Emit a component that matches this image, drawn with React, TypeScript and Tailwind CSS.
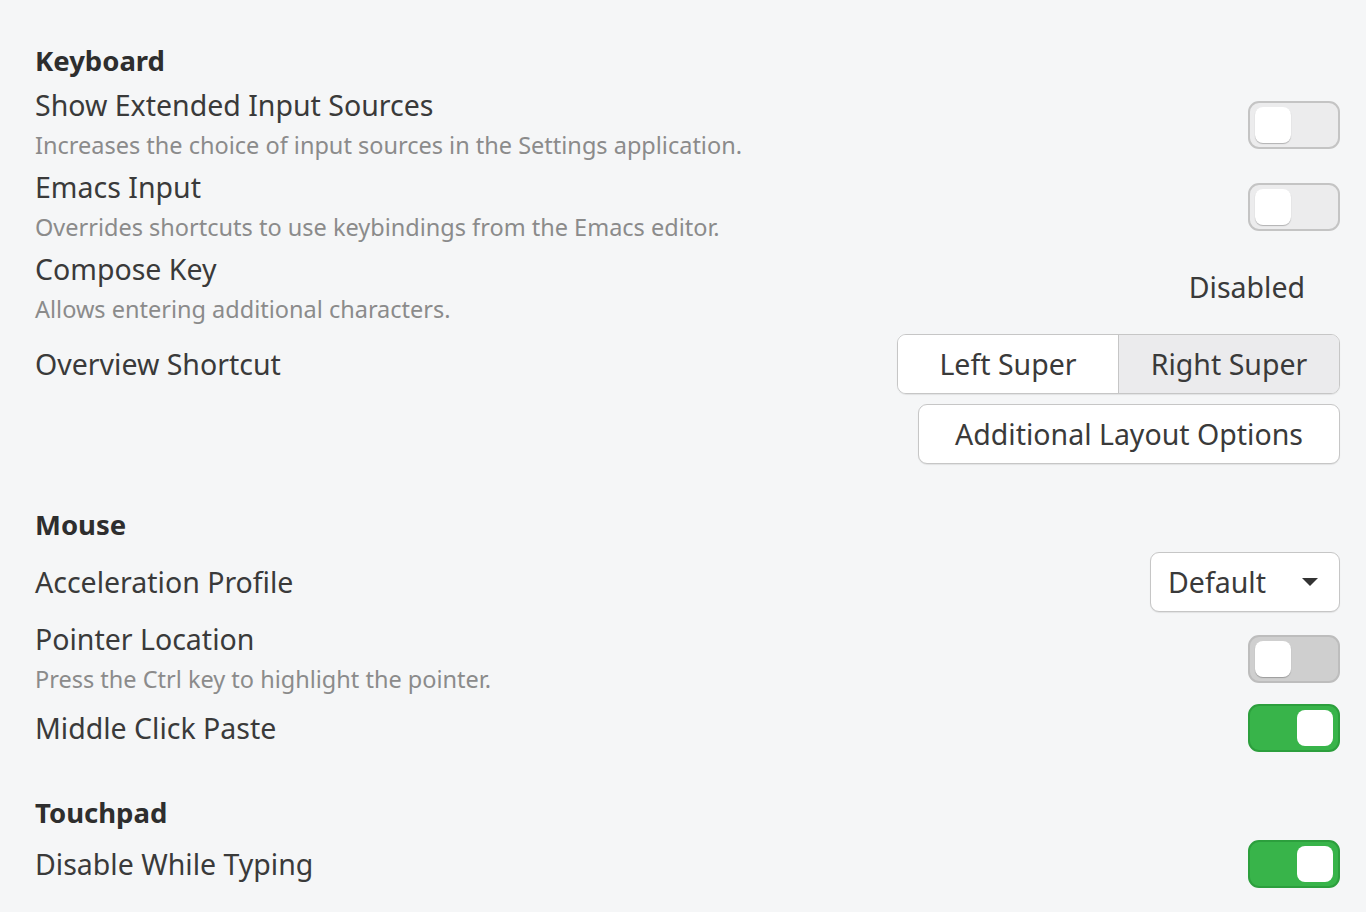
import React from "react";

function Switch({ state }: { state: "off" | "offgray" | "on" }) {
  if (state === "on") {
    return (
      <div className="w-[92px] h-[48px] rounded-[11px] bg-[#38b44a] border-2 border-[#2c9f3d] flex items-center justify-end pr-[5px] shrink-0">
        <div className="w-[36px] h-[36px] rounded-[8px] bg-white" />
      </div>
    );
  }
  const bg = state === "offgray" ? "bg-[#cfcfcf] border-[#bdbdbd]" : "bg-[#ececed] border-[#c4c4c4]";
  return (
    <div className={`w-[92px] h-[48px] rounded-[11px] border-2 ${bg} flex items-center pl-[5px] shrink-0`}>
      <div className="w-[36px] h-[36px] rounded-[8px] bg-white shadow-[0_1px_1px_rgba(0,0,0,0.25)]" />
    </div>
  );
}

function Title({ children }: { children: React.ReactNode }) {
  return <div className="text-[28.5px] leading-[40px] text-[#3a3a3a]">{children}</div>;
}
function Desc({ children }: { children: React.ReactNode }) {
  return <div className="text-[23.5px] leading-[40px] text-[#8b8b8b]">{children}</div>;
}
function Heading({ children, className = "" }: { children: React.ReactNode; className?: string }) {
  return <div className={`text-[27.5px] leading-[40px] font-bold text-[#2e2e2e] ${className}`}>{children}</div>;
}

export default function App() {
  return (
    <div
      className="w-[1366px] h-[912px] bg-[#f5f6f7] overflow-hidden pl-[35px] pr-[26px] pt-[41px] flex flex-col"
      style={{ fontFamily: '"Noto Sans", "Open Sans", sans-serif' }}
    >
      <Heading>Keyboard</Heading>

      <div className="mt-[4px] flex items-center justify-between">
        <div>
          <Title>Show Extended Input Sources</Title>
          <Desc>Increases the choice of input sources in the Settings application.</Desc>
        </div>
        <Switch state="off" />
      </div>

      <div className="mt-[2px] flex items-center justify-between">
        <div>
          <Title>Emacs Input</Title>
          <Desc>Overrides shortcuts to use keybindings from the Emacs editor.</Desc>
        </div>
        <Switch state="off" />
      </div>

      <div className="mt-[2px] flex items-center justify-between">
        <div>
          <Title>Compose Key</Title>
          <Desc>Allows entering additional characters.</Desc>
        </div>
        <div className="text-[28.5px] leading-[36px] text-[#3a3a3a] pr-[35px] mb-[4px]">Disabled</div>
      </div>

      <div className="mt-[5px] flex items-center justify-between h-[60px]">
        <Title>Overview Shortcut</Title>
        <div className="flex h-[60px] w-[443px] rounded-[9px] border border-[#c6c6c6] shadow-[0_1px_1px_rgba(0,0,0,0.08)] overflow-hidden">
          <div className="flex-1 bg-white flex items-center justify-center text-[28.5px] text-[#3a3a3a] border-r border-[#c6c6c6]">
            Left Super
          </div>
          <div className="flex-1 bg-[#ebebed] flex items-center justify-center text-[28.5px] text-[#3a3a3a]">
            Right Super
          </div>
        </div>
      </div>

      <div className="mt-[10px] flex justify-end">
        <div className="h-[60px] w-[422px] rounded-[9px] border border-[#c6c6c6] bg-white shadow-[0_1px_1px_rgba(0,0,0,0.08)] flex items-center justify-center text-[28.5px] text-[#3a3a3a]">
          Additional Layout Options
        </div>
      </div>

      <Heading className="mt-[41px]">Mouse</Heading>

      <div className="mt-[7px] flex items-center justify-between h-[60px]">
        <Title>Acceleration Profile</Title>
        <div className="h-[60px] w-[190px] rounded-[9px] border border-[#c6c6c6] bg-white shadow-[0_1px_1px_rgba(0,0,0,0.08)] flex items-center justify-between pl-[17px] pr-[20px] text-[28.5px] text-[#3a3a3a]">
          <span>Default</span>
          <svg width="18" height="10" viewBox="0 0 18 10">
            <path d="M1 1 L17 1 L9 9 Z" fill="#333" />
          </svg>
        </div>
      </div>

      <div className="mt-[7px] flex items-center justify-between">
        <div>
          <Title>Pointer Location</Title>
          <Desc>Press the Ctrl key to highlight the pointer.</Desc>
        </div>
        <Switch state="offgray" />
      </div>

      <div className="mt-[5px] flex items-center justify-between h-[48px]">
        <Title>Middle Click Paste</Title>
        <Switch state="on" />
      </div>

      <Heading className="mt-[41px]">Touchpad</Heading>

      <div className="mt-[7px] flex items-center justify-between h-[48px]">
        <Title>Disable While Typing</Title>
        <Switch state="on" />
      </div>
    </div>
  );
}
